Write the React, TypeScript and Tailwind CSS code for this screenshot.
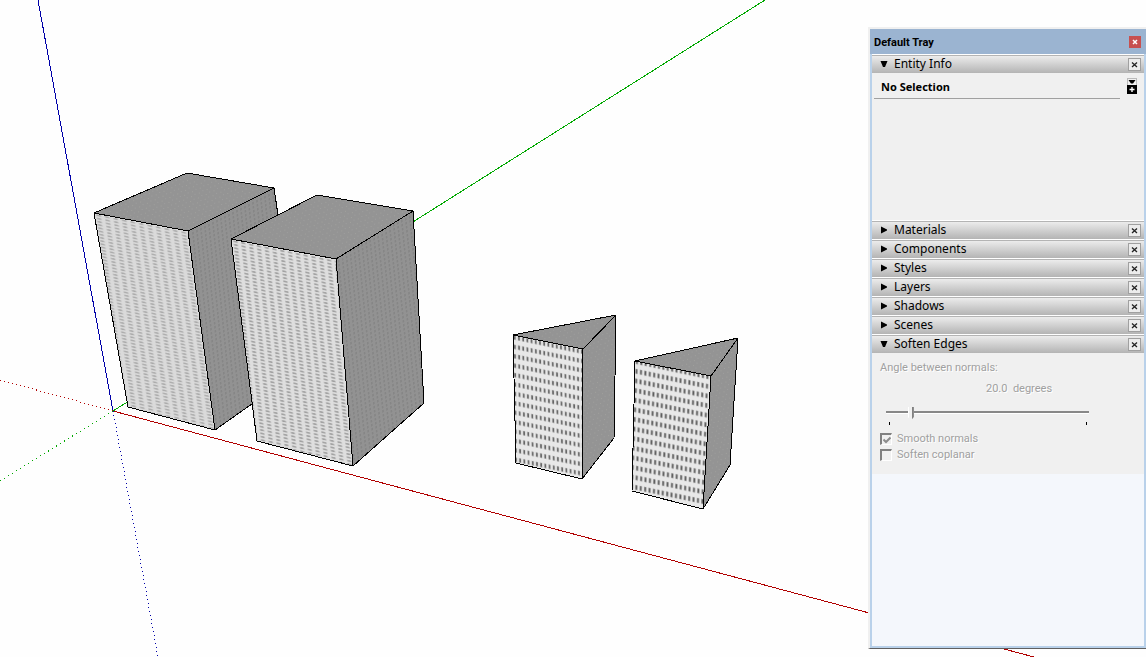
import React from "react";

type Face = { points: string; fill: string };

const backTower: Face[] = [
  { points: "94,213 187,173 274,188 188,231", fill: "url(#roof)" },
  { points: "94,213 188,231 215,430 128,407", fill: "url(#wallA)" },
  { points: "188,231 274,188 300,370 215,430", fill: "url(#shade)" },
];

const frontTower: Face[] = [
  { points: "231,239 317,195 413,211 336,259", fill: "url(#roof)" },
  { points: "231,239 336,259 353,466 257,441", fill: "url(#wallB)" },
  { points: "336,259 413,211 424,403 353,466", fill: "url(#shade)" },
];

const prisms: Face[] = [
  { points: "513,335 616,315 583,349", fill: "url(#roof)" },
  { points: "513,335 583,349 582,479 516,463", fill: "url(#windowsA)" },
  { points: "583,349 616,315 614,438 582,479", fill: "url(#roof)" },
  { points: "635,361 738,338 711,376", fill: "url(#roof)" },
  { points: "635,361 711,376 703,509 632,491", fill: "url(#windowsB)" },
  { points: "711,376 738,338 730,465 703,509", fill: "url(#roof)" },
];

function Solid({ items }: { items: Face[] }) {
  return (
    <g stroke="#000" strokeWidth="1" strokeLinejoin="round">
      {items.map((f) => (
        <polygon key={f.points} points={f.points} fill={f.fill} />
      ))}
    </g>
  );
}

function Viewport() {
  return (
    <svg width="1146" height="657" viewBox="0 0 1146 657" role="img" aria-label="Model view" className="block shrink-0" shapeRendering="crispEdges">
      <defs>
        <pattern id="roof" width="7" height="5" patternUnits="userSpaceOnUse" patternTransform="rotate(11)">
          <rect width="7" height="5" fill="#949494" />
          <rect x="1" y="1" width="1" height="1" fill="#a0a09c" />
          <rect x="4" y="3" width="1" height="1" fill="#9e9e9e" />
        </pattern>
        <pattern id="shade" width="4" height="4" patternUnits="userSpaceOnUse" patternTransform="matrix(1 -.5 .1 1 0 0)">
          <rect width="4" height="4" fill="#929292" />
          <rect x="1" y="1" width="1" height="2" fill="#868686" />
        </pattern>
        <pattern id="wallA" width="8.5" height="3.2" patternUnits="userSpaceOnUse" patternTransform="matrix(1 .2 .14 1 94 213)">
          <rect width="8.5" height="3.2" fill="#dadada" />
          <g shapeRendering="geometricPrecision">
            <rect x="2" y="1" width="5" height="1.6" fill="#bcbcbc" />
            <rect x="3" y="1.200" width="3" height="1" fill="#a4a4a4" />
          </g>
        </pattern>
        <pattern id="wallB" width="7.8" height="3.4" patternUnits="userSpaceOnUse" patternTransform="matrix(1 .2 .1 1 231 239)">
          <rect width="7.8" height="3.4" fill="#dedede" />
          <g shapeRendering="geometricPrecision">
            <rect x="2" y="1" width="4.600" height="1.7" fill="#b8b8b8" />
            <rect x="2.800" y="1.200" width="3" height="1.1" fill="#989898" />
          </g>
        </pattern>
        <pattern id="windowsA" width="4.2" height="9.4" patternUnits="userSpaceOnUse" patternTransform="matrix(1 .21 .01 1 513 334)">
          <rect width="4.2" height="9.4" fill="#e8e8e8" />
          <g shapeRendering="geometricPrecision">
            <rect x="0.500" y="0.800" width="2.400" height="4.800" fill="#c0c0c0" />
            <rect x="1" y="1.200" width="1.500" height="3.900" fill="#646464" />
          </g>
        </pattern>
        <pattern id="windowsB" width="4.4" height="9.6" patternUnits="userSpaceOnUse" patternTransform="matrix(1 .21 -.04 1 635 358)">
          <rect width="4.4" height="9.6" fill="#e8e8e8" />
          <g shapeRendering="geometricPrecision">
            <rect x="0.800" y="0.800" width="2.500" height="5.200" fill="#c0c0c0" />
            <rect x="1.300" y="1.200" width="1.600" height="4.300" fill="#5c5c5c" />
          </g>
        </pattern>
      </defs>
      <g fill="none" strokeWidth="1">
        <path d="M38 0L113 411" stroke="#0000a8" />
        <path d="M113 411L765 0" stroke="#00a800" />
        <path d="M113 411L1034 657" stroke="#b00000" />
        <path d="M113 411L0 380" stroke="#b00000" strokeDasharray="1 3.150" />
        <path d="M113 411L0 481" stroke="#00a800" strokeDasharray="1 3.700" />
        <path d="M113 411L158 657" stroke="#0000a8" strokeDasharray="1 3.060" />
      </g>
      <Solid items={backTower} />
      <polygon points="275,188 278,214 302,202 320,190 320,170 275,170" fill="#fefefe" />
      <path d="M274 188L278 214" stroke="#000" />
      <Solid items={frontTower} />
      <Solid items={prisms} />
    </svg>
  );
}

function CloseButton({ label }: { label: string }) {
  return (
    <button aria-label={label} className="mr-[3px] flex size-[13px] items-center justify-center border border-[#a0a0a0] bg-[#ececec]">
      <svg width="7" height="7" viewBox="0 0 7 7" aria-hidden="true">
        <path d="M1 1.500L6 6M6 1.500L1 6" stroke="#222" strokeWidth="1.300" />
      </svg>
    </button>
  );
}

function SectionHeader({ title, open = false }: { title: string; open?: boolean }) {
  return (
    <div className="flex h-[19px] shrink-0 items-center border-t border-white">
      <div className="flex h-full min-w-0 flex-1 items-center border-t border-[#b4b4b4] bg-linear-to-b from-[#ececec] to-[#b4b4b4]">
        <button aria-expanded={open} className="flex flex-1 items-center gap-1.5 pb-px pl-2 text-left text-[12px] leading-4 text-black">
          <svg width="8" height="8" viewBox="0 0 8 8" aria-hidden="true">
            <path d={open ? "M.5 1h7L5 7H3z" : "M1 .5v7L7 4.5v-1z"} fill="#000" />
          </svg>
          {title}
        </button>
        <CloseButton label={`Close ${title}`} />
      </div>
    </div>
  );
}

function CheckOption({ label, checked = false }: { label: string; checked?: boolean }) {
  return (
    <label className="flex h-4 items-center gap-[5px]">
      <span className="grid size-3 place-items-center border-t-2 border-r border-b border-l-2 border-t-[#808080] border-r-white border-b-white border-l-[#808080]">
        <input type="checkbox" defaultChecked={checked} disabled className="peer col-start-1 row-start-1 size-2 appearance-none" />
        <svg width="8" height="8" viewBox="0 0 8 8" aria-hidden="true" className="col-start-1 row-start-1 hidden peer-checked:block">
          <path d="M.5 3.500L3 6L7.500 1.500" fill="none" stroke="#8c8c8c" strokeWidth="2" />
        </svg>
      </span>
      {label}
    </label>
  );
}

function Tray() {
  return (
    <aside className="flex h-[622px] flex-col border-t-2 border-b border-l-2 border-t-[#f0f0f0] border-b-[#606060] border-l-[#f0f0f0]">
      <div className="flex flex-1 flex-col border-x-2 border-b-2 border-[#b9d1ea] bg-[#f4f7fc]">
        <div className="-mx-0.5 flex h-[25px] shrink-0 items-center justify-between bg-[#9bb4d1] pr-[5px] pl-1">
          <h1 className="pt-[3px] font-['Roboto',sans-serif] text-[11px] leading-4 font-bold">Default Tray</h1>
          <button aria-label="Close tray" className="flex size-3 items-center justify-center bg-[#c75050]">
            <svg width="6" height="6" viewBox="0 0 6 6" aria-hidden="true">
              <path d="M1 1L5 5M5 1L1 5" stroke="#fff" strokeWidth="1.500" />
            </svg>
          </button>
        </div>
        <SectionHeader title="Entity Info" open />
        <section className="h-[147px] bg-[#f0f0f0]">
          <div className="flex items-start justify-between pr-[7px] pl-0.5">
            <h2 className="h-[26px] w-[246px] border-b border-[#a0a0a0] pt-1.5 pl-[7px] text-[11px] leading-4 font-bold">No Selection</h2>
            <button aria-label="Show details" className="mt-[5px]">
              <svg width="10" height="16" viewBox="0 0 10 16" aria-hidden="true" className="block">
                <path d="M0 .5H10M.5 0V7M9.500 0V7" stroke="#bbb" />
                <path d="M1.500 2h7L6 5.500H4z" />
                <path d="M0 7h10v9H0z" />
                <path d="M5 9v5M2.500 11.500h5" stroke="#fff" strokeWidth="1.400" />
              </svg>
            </button>
          </div>
        </section>
        <SectionHeader title="Materials" />
        <SectionHeader title="Components" />
        <SectionHeader title="Styles" />
        <SectionHeader title="Layers" />
        <SectionHeader title="Shadows" />
        <SectionHeader title="Scenes" />
        <SectionHeader title="Soften Edges" open />
        <section className="flex h-[121px] flex-col bg-[#f0f0f0] px-2 pt-[7px] font-['Roboto',sans-serif] text-[11px] leading-4 text-[#a0a0a0] [text-shadow:1px_1px_0_#fff]">
          <label htmlFor="angle">Angle between normals:</label>
          <output htmlFor="angle" className="mt-[5px] pl-[106px] whitespace-pre">20.0  degrees</output>
          <div className="mt-1.5 ml-1.5 h-7 w-[203px]">
            <input
              id="angle"
              type="range"
              min="0"
              max="180"
              defaultValue="20"
              disabled
              className="block h-[18px] w-full appearance-none bg-transparent [&::-webkit-slider-runnable-track]:h-[3px] [&::-webkit-slider-runnable-track]:border-t-2 [&::-webkit-slider-runnable-track]:border-[#888] [&::-webkit-slider-runnable-track]:bg-white [&::-webkit-slider-thumb]:-mt-1.5 [&::-webkit-slider-thumb]:h-3.5 [&::-webkit-slider-thumb]:w-1.5 [&::-webkit-slider-thumb]:appearance-none [&::-webkit-slider-thumb]:border-r-2 [&::-webkit-slider-thumb]:border-l [&::-webkit-slider-thumb]:border-l-white [&::-webkit-slider-thumb]:border-r-[#808080] [&::-webkit-slider-thumb]:bg-[#f0f0f0] [&::-webkit-slider-thumb]:[clip-path:polygon(0_0,100%_0,100%_75%,50%_100%,0_75%)]"
            />
            <div className="flex justify-between pt-px pr-0.5 pl-[3px]">
              <i className="h-[3px] w-px bg-black" />
              <i className="h-[3px] w-px bg-black" />
            </div>
          </div>
          <CheckOption label="Smooth normals" checked />
          <CheckOption label="Soften coplanar" />
        </section>
      </div>
    </aside>
  );
}

export default function App() {
  return (
    <main className="grid min-h-screen grid-cols-[minmax(0,1fr)_278px] overflow-hidden bg-[#fefefe] font-['Noto_Sans',sans-serif] text-black">
      <div className="col-span-2 col-start-1 row-start-1">
        <Viewport />
      </div>
      <div className="col-start-2 row-start-1 pt-[27px]">
        <Tray />
      </div>
    </main>
  );
}
